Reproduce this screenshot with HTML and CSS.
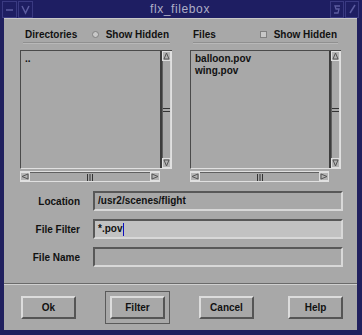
FILE: index.html
```html
<!DOCTYPE html>
<html lang="en">
<head>
    <meta charset="UTF-8">
    <title>flx_filebox</title>
    <link rel="stylesheet" href="styles.css">
</head>
<body>
    <div class="window">
        <div class="titlebar">
            <div class="tb-group">
                <span class="tb-btn"><svg width="13" height="14" viewBox="0 0 13 14"><path d="M3 8 H10" stroke="#5c5ca0" stroke-width="1.5" fill="none"/></svg></span>
                <span class="tb-btn"><svg width="13" height="14" viewBox="0 0 13 14"><path d="M3 4 L6.5 11 L10 4" stroke="#5c5ca0" stroke-width="1.5" fill="none"/></svg></span>
            </div>
            <div class="title">flx_filebox</div>
            <div class="tb-group">
                <span class="tb-btn"><svg width="12" height="14" viewBox="0 0 12 14"><path d="M9 4 H4 L5 7 H8 L7 11 H3" stroke="#5c5ca0" stroke-width="1.3" fill="none"/></svg></span>
                <span class="tb-btn"><svg width="12" height="14" viewBox="0 0 12 14"><path d="M9 3 L4 11" stroke="#5c5ca0" stroke-width="1.5" fill="none"/></svg></span>
            </div>
        </div>
        <div class="frame">
            <div class="panes">
                <div class="pane pane-dirs">
                    <div class="pane-head">
                        <span>Directories</span>
                        <span class="toggle"><span class="radio"></span>Show Hidden</span>
                    </div>
                    <div class="list-box">
                        <div class="list">..</div>
                        <div class="vscroll">
                            <svg class="arrow" width="9" height="10" viewBox="0 0 9 10"><rect x="0.5" y="0.5" width="8" height="9" fill="#b4b4b4" stroke="#e0e0e0"/><path d="M4.5 2 L2 8 H7 Z" fill="none" stroke="#555"/></svg>
                            <div class="vthumb"><svg width="7" height="4" viewBox="0 0 7 4"><path d="M0 0.5 H7 M0 3.5 H7" stroke="#333"/></svg></div>
                            <svg class="arrow" width="9" height="10" viewBox="0 0 9 10"><rect x="0.5" y="0.5" width="8" height="9" fill="#b4b4b4" stroke="#e0e0e0"/><path d="M4.5 8 L2 2 H7 Z" fill="none" stroke="#555"/></svg>
                        </div>
                    </div>
                    <div class="hscroll">
                        <svg class="arrow" width="10" height="9" viewBox="0 0 10 9"><rect x="0.5" y="0.5" width="9" height="8" fill="#b4b4b4" stroke="#e0e0e0"/><path d="M2 4.5 L8 2 V7 Z" fill="none" stroke="#555"/></svg>
                        <div class="hthumb"><svg width="6" height="7" viewBox="0 0 6 7"><path d="M0.5 0 V7 M3 0 V7 M5.5 0 V7" stroke="#333"/></svg></div>
                        <svg class="arrow" width="10" height="9" viewBox="0 0 10 9"><rect x="0.5" y="0.5" width="9" height="8" fill="#b4b4b4" stroke="#e0e0e0"/><path d="M8 4.5 L2 2 V7 Z" fill="none" stroke="#555"/></svg>
                    </div>
                </div>
                <div class="pane pane-files">
                    <div class="pane-head">
                        <span>Files</span>
                        <span class="toggle"><span class="check"></span>Show Hidden</span>
                    </div>
                    <div class="list-box">
                        <div class="list">balloon.pov<br>wing.pov</div>
                        <div class="vscroll">
                            <svg class="arrow" width="9" height="10" viewBox="0 0 9 10"><rect x="0.5" y="0.5" width="8" height="9" fill="#b4b4b4" stroke="#e0e0e0"/><path d="M4.5 2 L2 8 H7 Z" fill="none" stroke="#555"/></svg>
                            <div class="vthumb"><svg width="7" height="4" viewBox="0 0 7 4"><path d="M0 0.5 H7 M0 3.5 H7" stroke="#333"/></svg></div>
                            <svg class="arrow" width="9" height="10" viewBox="0 0 9 10"><rect x="0.5" y="0.5" width="8" height="9" fill="#b4b4b4" stroke="#e0e0e0"/><path d="M4.5 8 L2 2 H7 Z" fill="none" stroke="#555"/></svg>
                        </div>
                    </div>
                    <div class="hscroll">
                        <svg class="arrow" width="10" height="9" viewBox="0 0 10 9"><rect x="0.5" y="0.5" width="9" height="8" fill="#b4b4b4" stroke="#e0e0e0"/><path d="M2 4.5 L8 2 V7 Z" fill="none" stroke="#555"/></svg>
                        <div class="hthumb"><svg width="6" height="7" viewBox="0 0 6 7"><path d="M0.5 0 V7 M3 0 V7 M5.5 0 V7" stroke="#333"/></svg></div>
                        <svg class="arrow" width="10" height="9" viewBox="0 0 10 9"><rect x="0.5" y="0.5" width="9" height="8" fill="#b4b4b4" stroke="#e0e0e0"/><path d="M8 4.5 L2 2 V7 Z" fill="none" stroke="#555"/></svg>
                    </div>
                </div>
            </div>
            <div class="fields">
                <div class="field">
                    <span class="field-label">Location</span>
                    <div class="input">/usr2/scenes/flight</div>
                </div>
                <div class="field">
                    <span class="field-label">File Filter</span>
                    <div class="input input-active">*.pov<span class="caret"></span></div>
                </div>
                <div class="field">
                    <span class="field-label">File Name</span>
                    <div class="input"></div>
                </div>
            </div>
            <div class="separator"></div>
            <div class="buttons">
                <button class="btn">Ok</button>
                <button class="btn btn-default">Filter</button>
                <button class="btn">Cancel</button>
                <button class="btn">Help</button>
            </div>
        </div>
    </div>
</body>
</html>
```

FILE: styles.css
```css
body {
    margin: 0;
    background-color: #20205e;
    font-family: 'Liberation Sans', Arial, sans-serif;
}
.window {
    width: 362px;
    height: 335px;
    display: flex;
    flex-direction: column;
}
.titlebar {
    height: 18px;
    display: flex;
    align-items: center;
    justify-content: space-between;
    padding: 0 2px;
    background-color: #1e1e62;
    box-sizing: border-box;
}
.tb-group {
    display: flex;
}
.tb-btn {
    display: flex;
    align-items: center;
    justify-content: center;
    height: 15px;
    border: 1px solid #3a3a82;
    margin-right: 1px;
}
.title {
    color: #aeaec6;
    font-size: 12px;
    letter-spacing: 0.6px;
    margin-left: -4px;
}
.frame {
    flex: 1;
    display: flex;
    flex-direction: column;
    background-color: #a8a8a8;
    margin: 0 5px 5px 4px;
    border-top: 1px solid #c8c8c8;
    font-size: 10px;
    font-weight: bold;
    color: #111;
}
.panes {
    display: flex;
    gap: 18px;
    padding: 7px 16px 0 16px;
}
.pane-dirs {
    width: 152px;
}
.pane-files {
    width: 151px;
}
.pane-head {
    display: flex;
    justify-content: space-between;
    align-items: center;
    height: 16px;
    margin: 0 2px 7px 3px;
    padding: 0 1px 0 2px;
    border-bottom: 1px solid #909090;
    box-shadow: 0 1px 0 #b8b8b8;
}
.pane-files .pane-head {
    margin: 0 3px 7px 3px;
    padding: 0 1px 0 0;
}
.toggle {
    display: flex;
    align-items: center;
}
.radio, .check {
    width: 7px;
    height: 7px;
    margin-right: 7px;
    background-color: #c8c8c8;
    border: 1px solid #808080;
    box-sizing: border-box;
}
.radio {
    border-radius: 50%;
}
.list-box {
    display: flex;
    height: 119px;
    border-top: 1px solid #4a4a4a;
    border-left: 1px solid #4a4a4a;
    border-bottom: 1px solid #e0e0e0;
    box-sizing: border-box;
}
.list {
    flex: 1;
    padding: 2px 4px;
    line-height: 12px;
    border-right: 2px solid #3c3c3c;
}
.vscroll {
    width: 9px;
    display: flex;
    flex-direction: column;
    border-right: 1px solid #e0e0e0;
}
.vthumb {
    flex: 1;
    display: flex;
    align-items: center;
    justify-content: center;
    border-left: 1px solid #606060;
    border-right: 1px solid #d8d8d8;
}
.hscroll {
    display: flex;
    height: 11px;
    margin-top: 2px;
    width: calc(100% - 12px);
    border-top: 1px solid #e0e0e0;
    border-bottom: 1px solid #e0e0e0;
    box-sizing: border-box;
    align-items: center;
}
.hthumb {
    flex: 1;
    height: 100%;
    display: flex;
    align-items: center;
    justify-content: center;
    border-top: 1px solid #606060;
    box-sizing: border-box;
}
.fields {
    display: flex;
    flex-direction: column;
    gap: 8px;
    margin-top: 9px;
    padding-right: 14px;
}
.field {
    display: flex;
    align-items: center;
    gap: 13px;
}
.field-label {
    width: 76px;
    text-align: right;
}
.input {
    flex: 1;
    height: 20px;
    line-height: 16px;
    padding: 0 3px;
    box-sizing: border-box;
    border: 2px solid;
    border-color: #585858 #d8d8d8 #d8d8d8 #585858;
    display: flex;
    align-items: center;
}
.input-active {
    background-color: #c2c2c2;
}
.caret {
    width: 1px;
    height: 13px;
    margin-left: 1px;
    background-color: #1010c0;
}
.separator {
    margin-top: 16px;
    border-top: 1px solid #6a6a6a;
    border-bottom: 1px solid #d0d0d0;
}
.buttons {
    flex: 1;
    display: flex;
    align-items: center;
    justify-content: space-between;
    padding: 0 14px 0 17px;
}
.btn {
    width: 55px;
    height: 23px;
    background-color: #a8a8a8;
    border: 2px solid;
    border-color: #dcdcdc #555 #555 #dcdcdc;
    font-family: 'Liberation Sans', Arial, sans-serif;
    font-size: 10px;
    font-weight: bold;
    color: #111;
    padding: 0;
}
.btn-default {
    outline: 1px solid #5a5a5a;
    outline-offset: 4px;
}
```
